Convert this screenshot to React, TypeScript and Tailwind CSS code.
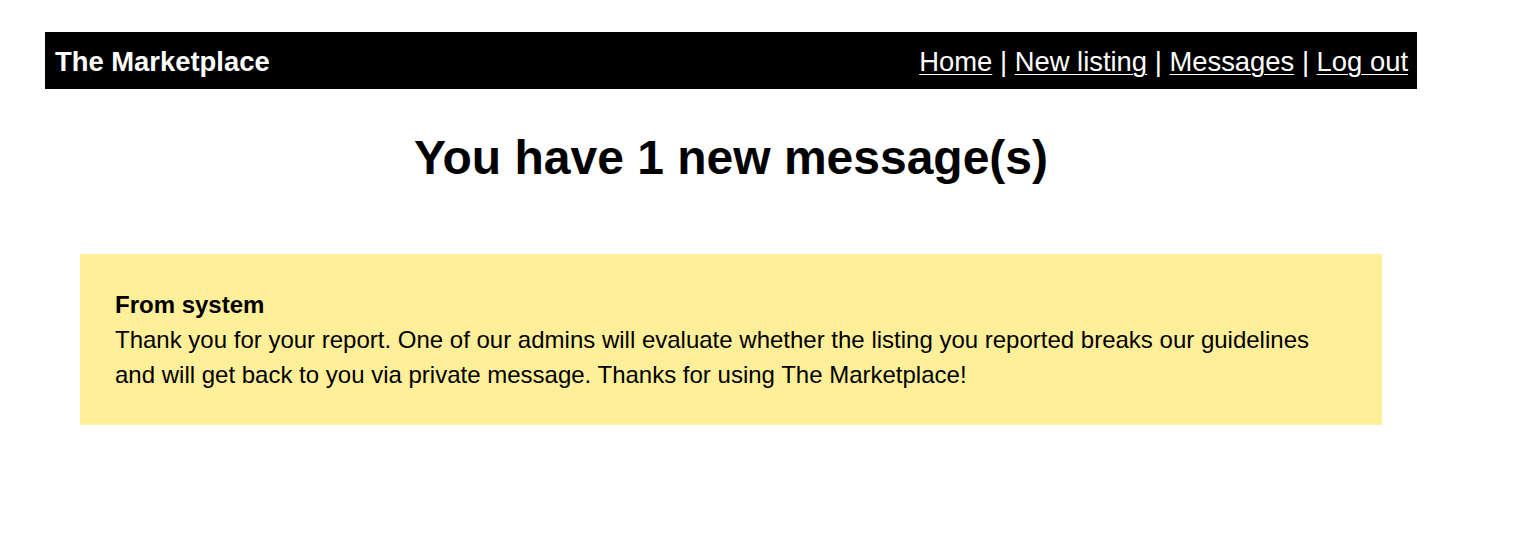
const links = ["Home", "New listing", "Messages", "Log out"];

export default function App() {
  return (
    <div className="min-h-[555px] bg-white pt-[32px] font-['Liberation_Sans',Arial,sans-serif] text-black">
      <div className="ml-[45px] w-[1372px]">
        <header className="flex h-[57px] items-center justify-between bg-black pt-[2px] pl-[10px] pr-[9px] text-white">
          <div className="text-[27.4px] font-bold leading-none">The Marketplace</div>
          <nav className="text-[27.4px] leading-none">
            {links.map((l, i) => (
              <span key={l}>
                {i > 0 && <span> | </span>}
                <a href="#" className="underline underline-offset-[3px] decoration-1">
                  {l}
                </a>
              </span>
            ))}
          </nav>
        </header>

        <h1 className="mt-[41px] text-center text-[48px] font-bold leading-[55px]">
          You have 1 new message(s)
        </h1>

        <div className="mx-[35px] mt-[69px] bg-[#ffef99] px-[35px] pt-[33px] pb-[33px] text-[24px] leading-[35px]">
          <div className="font-bold">From system</div>
          <p>
            Thank you for your report. One of our admins will evaluate whether the listing you
            reported breaks our guidelines and will get back to you via private message. Thanks for
            using The Marketplace!
          </p>
        </div>
      </div>
    </div>
  );
}
